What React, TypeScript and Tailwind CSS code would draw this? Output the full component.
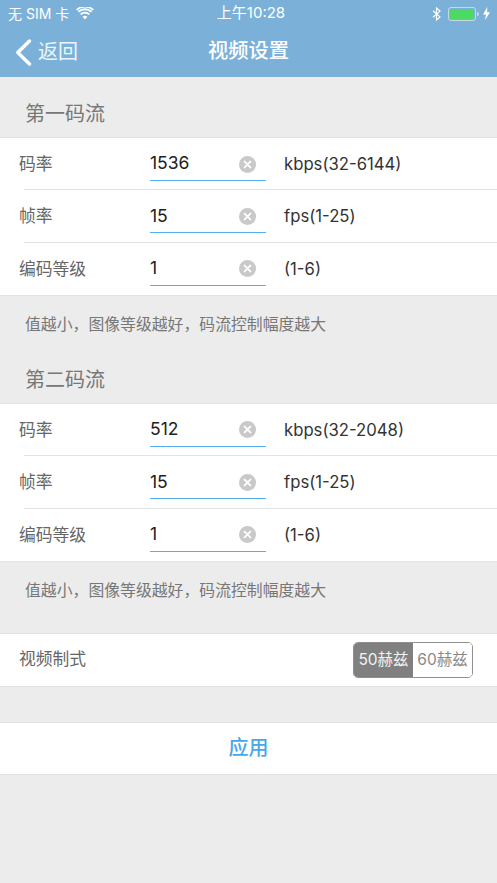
import React from 'react'

const font = { fontFamily: 'Inter, "Noto Sans CJK SC", sans-serif' }

type RowProps = { label: string; value: string; hint: string; last?: boolean }

function ClearIcon() {
  return (
    <svg width="17" height="17" viewBox="0 0 17 17" className="shrink-0">
      <circle cx="8.5" cy="8.5" r="8.5" fill="#c9c9c9" />
      <path d="M5.6 5.6l5.8 5.8M11.4 5.6l-5.8 5.8" stroke="#fff" strokeWidth="1.9" strokeLinecap="round" />
    </svg>
  )
}

function Row({ label, value, hint, last }: RowProps) {
  return (
    <div className="relative flex h-[52.33px] items-start pl-[19px]">
      <div className="w-[131px] pt-[14px] text-[16.8px] text-[#666]">{label}</div>
      <div className="flex h-[43px] w-[116px] items-center justify-between border-b border-[#56aeee] pt-[10px] pr-[10px]">
        <span className="-mt-[1px] text-[17.5px] text-[#222]">{value}</span>
        <ClearIcon />
      </div>
      <div className="ml-[18px] pt-[14px] text-[16.7px] text-[#333]">{hint}</div>
      {!last && <div className="absolute right-0 bottom-0 left-[24px] h-px bg-[#e3e3e3]" />}
    </div>
  )
}

function Group({ title, rate, rateHint }: { title: string; rate: string; rateHint: string }) {
  return (
    <div>
      <div className="flex h-[60px] items-center pt-[14px] pl-[25px] text-[20px] text-[#777]">{title}</div>
      <div className="border-y border-[#e3e3e3] bg-white">
        <Row label="码率" value={rate} hint={rateHint} />
        <Row label="帧率" value="15" hint="fps(1-25)" />
        <Row label="编码等级" value="1" hint="(1-6)" last />
      </div>
      <div className="flex h-[47px] items-center pt-[11px] pl-[25px] text-[15.85px] text-[#777]">
        值越小，图像等级越好，码流控制幅度越大
      </div>
    </div>
  )
}

export default function App() {
  return (
    <div className="flex h-[883px] w-[497px] flex-col overflow-hidden bg-[#ececec]" style={font}>
      <div className="h-[77px] bg-[#7bb1d9] text-white">
        <div className="flex h-[26px] items-center justify-between pt-[1px] pr-[7px] pl-[8px]">
          <div className="flex w-[164px] items-center gap-[7px] text-[14px]">
            <span>无 SIM 卡</span>
            <svg width="18" height="13" viewBox="0 0 18 13">
              <path d="M9 12.6l2.4-2.9a3.7 3.7 0 0 0-4.8 0z" fill="#fff" />
              <path d="M4.6 7.4a6.8 6.8 0 0 1 8.8 0M2.4 4.8a10 10 0 0 1 13.2 0" stroke="#fff" strokeWidth="1.9" fill="none" />
              <path d="M.6 2.9a12.6 12.6 0 0 1 16.8 0" stroke="#fff" strokeWidth="1.6" fill="none" />
            </svg>
          </div>
          <div className="text-[15px]">上午10:28</div>
          <div className="flex w-[160px] items-center justify-end gap-[4px]">
            <svg width="9" height="14" viewBox="0 0 9 14" className="mr-[3px]">
              <path d="M1 3.8l7 6.1L4.5 13V1L8 4.1 1 10.2" stroke="#fff" strokeWidth="1.2" fill="none" />
            </svg>
            <div className="flex items-center gap-[1px]">
              <div className="h-[14px] w-[28px] rounded-[3px] border border-[#c5d9e8] p-[1px]">
                <div className="h-full w-full rounded-[1.5px] bg-[#4cd964]" />
              </div>
              <div className="h-[4px] w-[1.5px] rounded-r-sm bg-[#c5d9e8]" />
            </div>
            <svg width="7" height="13" viewBox="0 0 7 13">
              <path d="M4.4 0L0 7.4h2.8L2.2 13 7 5.2H4z" fill="#fff" />
            </svg>
          </div>
        </div>
        <div className="relative flex h-[51px] items-center justify-center">
          <div className="absolute top-[11px] left-[15px] flex items-center gap-[6px] text-[#eef5fa]">
            <svg width="17" height="27" viewBox="0 0 17 27">
              <path d="M14.5 2L2.8 13.5 14.5 25" stroke="#fff" strokeWidth="3.4" strokeLinecap="round" strokeLinejoin="round" fill="none" />
            </svg>
            <span className="text-[20px]">返回</span>
          </div>
          <div className="text-[20.25px] font-medium">视频设置</div>
        </div>
      </div>

      <Group title="第一码流" rate="1536" rateHint="kbps(32-6144)" />
      <Group title="第二码流" rate="512" rateHint="kbps(32-2048)" />

      <div className="mt-[24px] flex h-[54px] items-center justify-between border-y border-[#e3e3e3] bg-white pr-[24px] pl-[19px]">
        <span className="text-[16.8px] text-[#666]">视频制式</span>
        <div className="flex h-[36px] w-[120px] overflow-hidden rounded-[5px] border-[1.5px] border-[#8f8f8f] text-[15.5px]">
          <div className="flex w-[59px] items-center justify-center whitespace-nowrap bg-[#808080] text-[#f3f3f3]">50赫兹</div>
          <div className="flex flex-1 items-center justify-center whitespace-nowrap bg-white text-[#888]">60赫兹</div>
        </div>
      </div>

      <div className="mt-[35px] flex h-[53px] items-center justify-center border-y border-[#e3e3e3] bg-white text-[20px] font-medium text-[#47a7ea]">
        应用
      </div>
    </div>
  )
}
